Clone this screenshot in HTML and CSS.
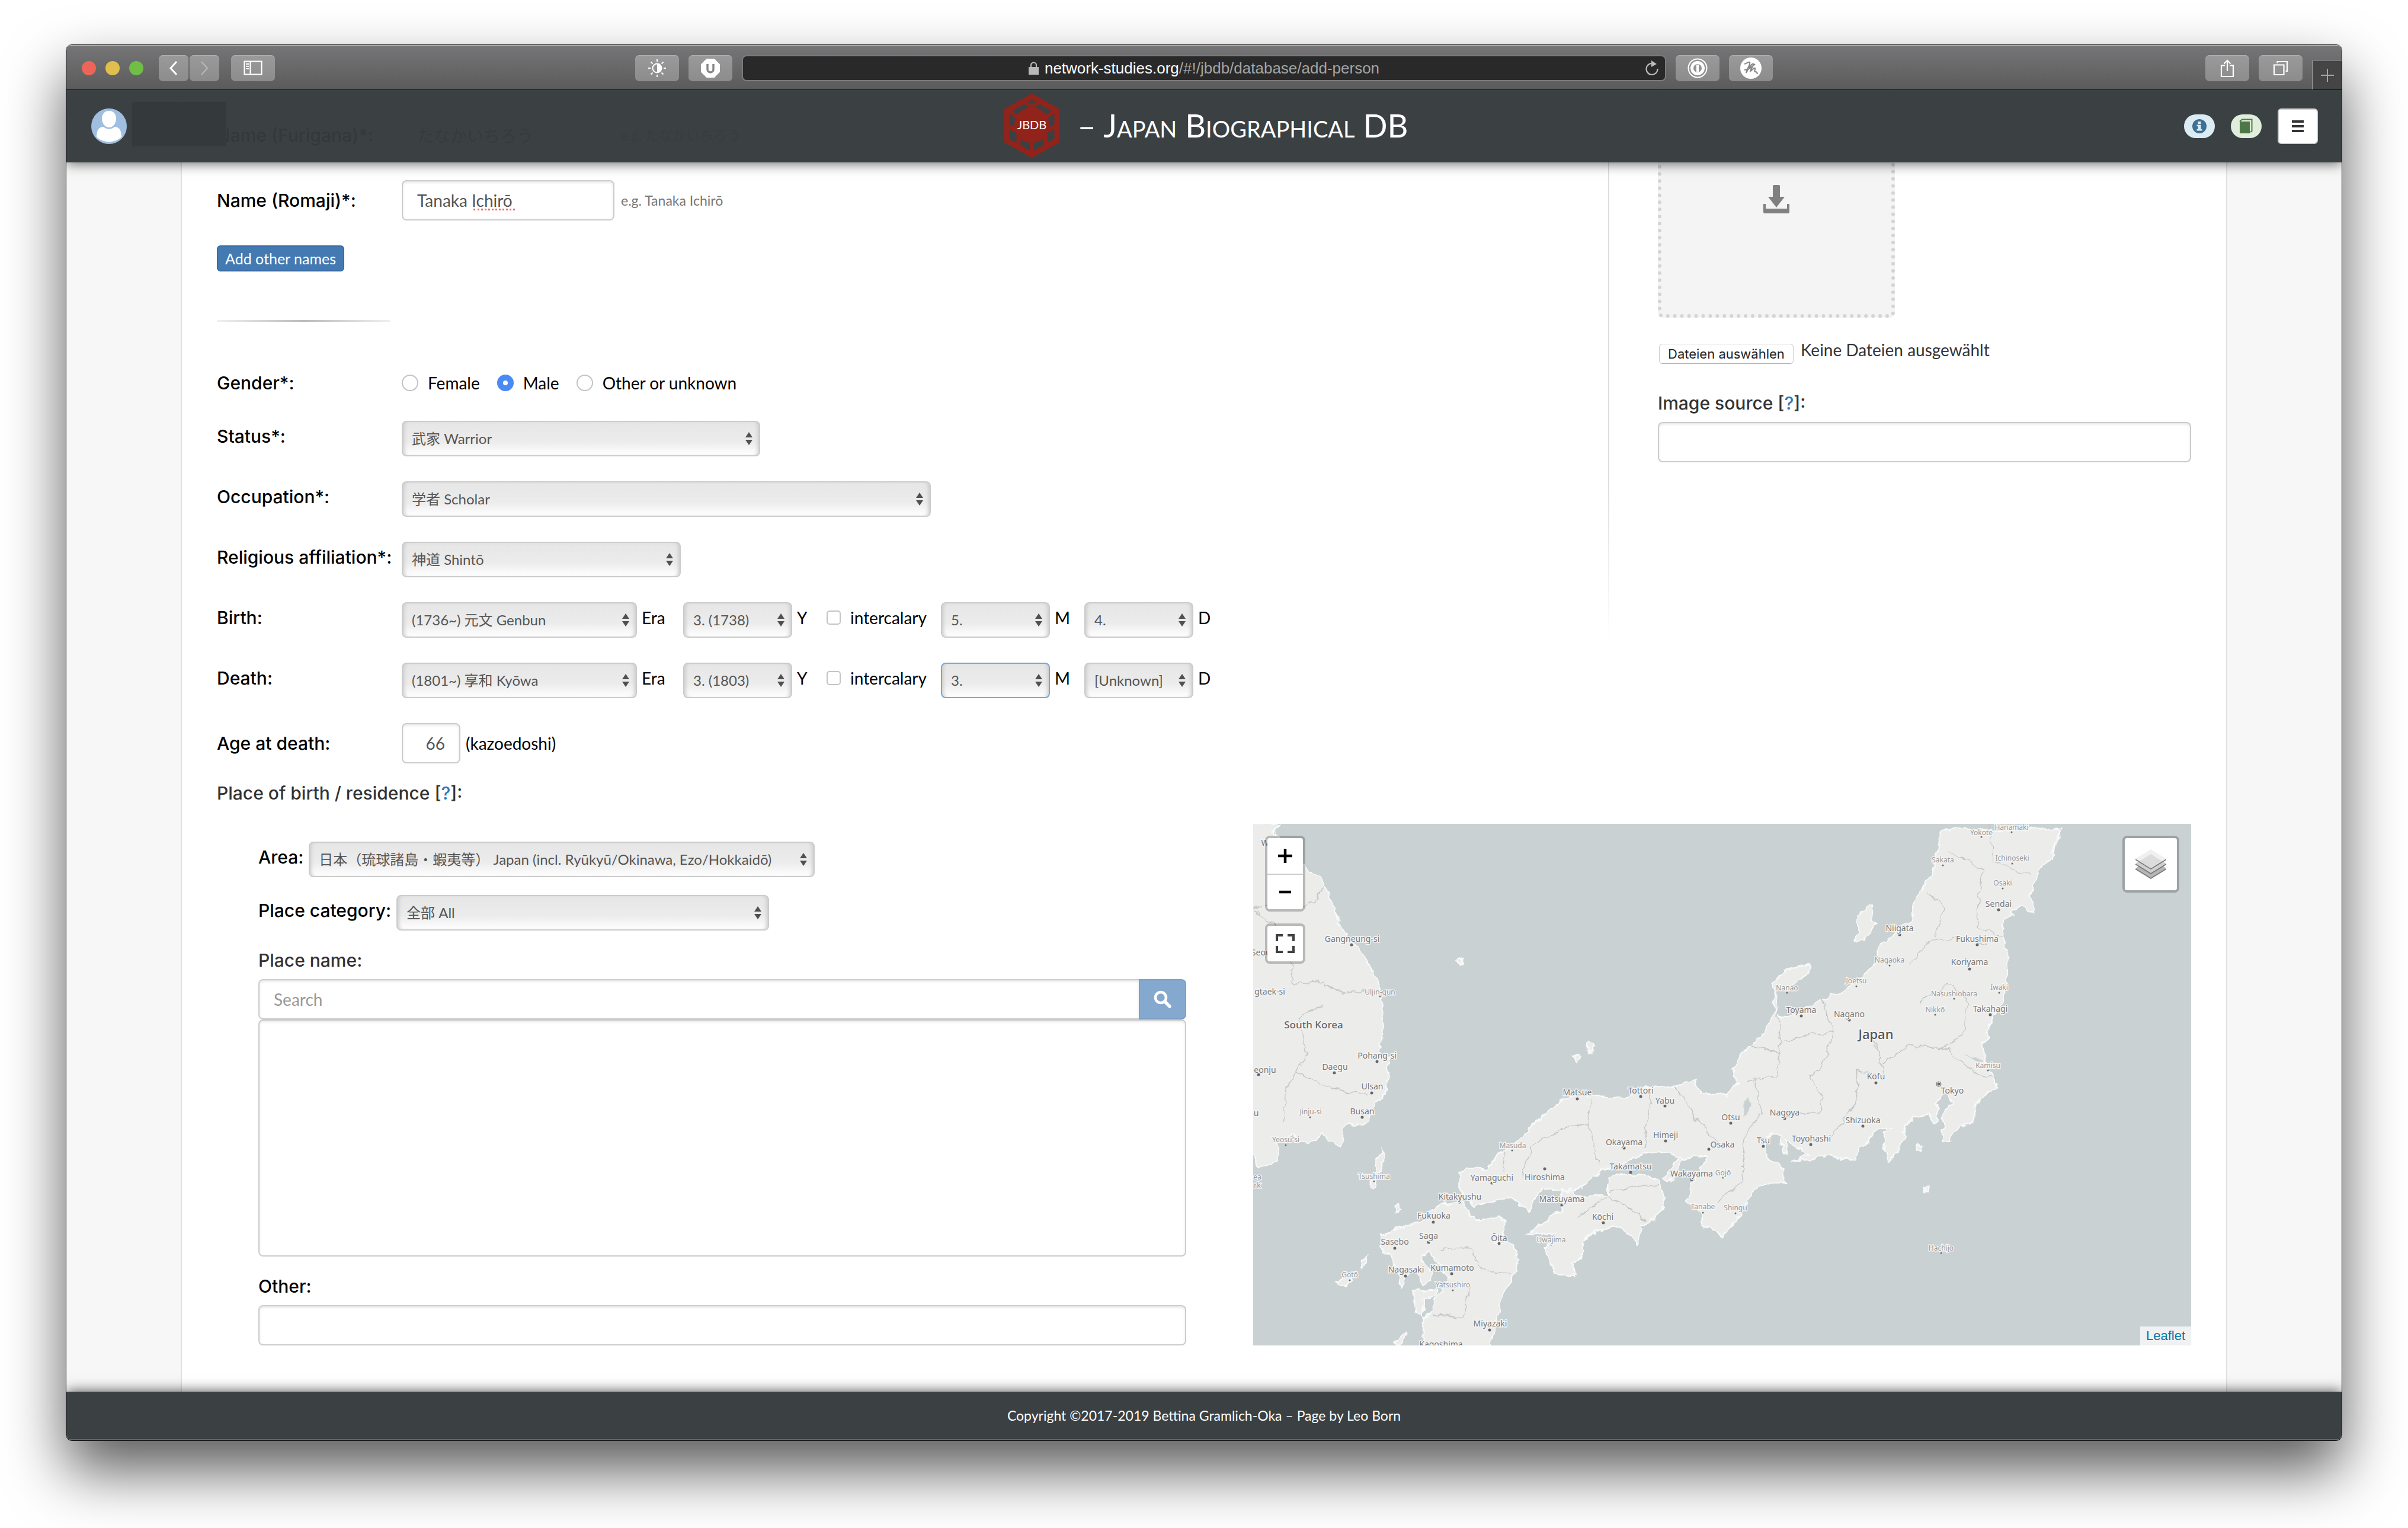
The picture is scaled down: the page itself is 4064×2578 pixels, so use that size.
FILE: index.html
```html
<!DOCTYPE html>
<html lang="en">
<head>
<meta charset="utf-8">
<title>Japan Biographical DB</title>
<link rel="stylesheet" href="styles.css">
</head>
<body>
<div class="window">
  <div class="toolbar">
    <div class="toolbar-side">
      <div class="lights"><span class="light light-red"></span><span class="light light-yellow"></span><span class="light light-green"></span></div>
      <div class="nav-pair">
        <button class="tool tool-narrow" aria-label="Back"><svg width="18" height="28" viewBox="0 0 18 28"><path d="M14 3 4 14l10 11" fill="none" stroke="#fff" stroke-width="3"/></svg></button>
        <button class="tool tool-narrow" aria-label="Forward"><svg width="18" height="28" viewBox="0 0 18 28"><path d="M4 3l10 11L4 25" fill="none" stroke="#b9b9b9" stroke-width="2"/></svg></button>
      </div>
      <button class="tool" aria-label="Sidebar"><svg width="32" height="26" viewBox="0 0 32 26"><path d="M1.500 1.500h29v22h-29zM11.500 1v23M4 6h5M4 10h5M4 14h5" fill="none" stroke="#fff" stroke-width="2.200"/></svg></button>
    </div>
    <div class="toolbar-center">
      <button class="tool" aria-label="Brightness"><svg width="30" height="30" viewBox="0 0 30 30"><circle cx="15" cy="15" r="7.500" fill="none" stroke="#fff" stroke-width="2"/><path d="M15 8a7 7 0 0 1 0 14z" fill="#fff"/><path d="M15 0v4M15 26v4M0 15h4M26 15h4M4.500 4.500l3 3M22.500 22.500l3 3M25.500 4.500l-3 3M7.500 22.500l-3 3" stroke="#fff" stroke-width="2"/></svg></button>
      <button class="tool" aria-label="Extension U"><svg width="34" height="34" viewBox="0 0 34 34"><path d="M10.500 1h13L33 10.500v13L23.500 33h-13L1 23.500v-13z" fill="#fff"/><path d="M12 10v9a5 5 0 0 0 10 0v-9" fill="none" stroke="#888" stroke-width="3.500"/></svg></button>
      <div class="address">
        <svg class="lock" width="17" height="22" viewBox="0 0 17 22"><path d="M0 9h17v13H0z" fill="#b8b8b8"/><path d="M4 10V6a4.500 4.500 0 0 1 9 0v4" fill="none" stroke="#b8b8b8" stroke-width="2.200"/></svg>
        <span class="url"><b>network-studies.org</b>/#!/jbdb/database/add-person</span>
        <svg class="reload" width="24" height="28" viewBox="0 0 24 28"><path d="M15 6.500A9.500 9.500 0 1 0 21.500 15" fill="none" stroke="#bbb" stroke-width="2.200"/><path d="M11 1l9 6-9 5z" fill="#bbb"/></svg>
      </div>
      <button class="tool" aria-label="Password manager"><svg width="34" height="34" viewBox="0 0 34 34"><circle cx="17" cy="17" r="15.500" fill="none" stroke="#fff" stroke-width="2"/><circle cx="17" cy="17" r="9.500" fill="none" stroke="#fff" stroke-width="5"/><path d="M17 11v12" stroke="#fff" stroke-width="4"/></svg></button>
      <button class="tool" aria-label="Extension"><svg width="36" height="36" viewBox="0 0 36 36"><circle cx="18" cy="18" r="18" fill="#fff"/><path d="M7 11c4-1 7-4 9-3 2 2-5 13-6 18 3-6 9-16 12-15 2 1-5 9-5 12 2 0 5-6 8-5 1 1-2 5 0 6s3-1 4 4M7 21c8-1 13-5 18-10" fill="none" stroke="#888" stroke-width="2.200"/></svg></button>
    </div>
    <div class="toolbar-side toolbar-right">
      <button class="tool" aria-label="Share"><svg width="24" height="32" viewBox="0 0 24 32"><path d="M8 11.500H2v18.500h20V11.500h-6M12 21V3M6.500 8.500 12 3l5.500 5.500" fill="none" stroke="#fff" stroke-width="2.200"/></svg></button>
      <button class="tool" aria-label="Show tabs"><svg width="26" height="26" viewBox="0 0 26 26"><path d="M2 7.500h16.500V24H2zM7.500 4.500V2H24v16h-2.500" fill="none" stroke="#fff" stroke-width="2.200"/></svg></button>
      <button class="new-tab" aria-label="New tab"><svg width="22" height="22" viewBox="0 0 22 22"><path d="M11 0v22M0 11h22" stroke="#a5a5a5" stroke-width="2"/></svg></button>
    </div>
  </div>

  <div class="page">
    <header class="site-header">
      <div class="account">
        <svg width="60" height="60" viewBox="0 0 60 60"><circle cx="30" cy="30" r="30" fill="#a0bedf"/><path d="M30 4c8 0 12 6 12 13 0 8-5 15-12 15s-12-7-12-15C18 10 22 4 30 4z" fill="#fff"/><path d="M9 48c0-10 3-17 12-17 5 5 13 5 18 0 9 0 12 7 12 17-11 11-31 11-42 0z" fill="#fff"/></svg>
        <span class="account-name"></span>
      </div>
      <h1 class="brand">
        <svg width="95" height="108" viewBox="0 0 95 108"><g fill="none" stroke="#92231a"><path d="M47.500 5 90 29v50L47.500 103 5 79V29z" stroke-width="9"/><path d="M33 12l32 24M62 12 30 36M5 27l25 17M90 27 65 44" stroke-width="6"/><path d="M5 54l20 10v30M90 54 70 64v30M47.500 76v28" stroke-width="7"/></g><circle cx="47.500" cy="53" r="30" fill="#92231a"/><text x="47.500" y="60" text-anchor="middle" class="logo-text">JBDB</text></svg>
        <span>– Japan Biographical DB</span>
      </h1>
      <div class="header-actions">
        <a href="#info" class="pill pill-info" aria-label="Information"><svg width="24" height="24" viewBox="0 0 24 24"><circle cx="12" cy="12" r="12" fill="#3f6f91"/><path d="M9.500 4h5v4h-5zM7.500 9.500h7V17h2v2.500h-9V17h2v-5h-2z" fill="#dcecf5"/></svg></a>
        <a href="#guide" class="pill pill-guide" aria-label="Guide"><svg width="24" height="26" viewBox="0 0 24 26"><path d="M1 5h17v20H1z" fill="#4d7748"/><path d="M1 5l4-3.500h16.500V21L19 23" fill="none" stroke="#4d7748" stroke-width="2"/></svg></a>
        <button class="menu" aria-label="Menu"><svg width="20" height="20" viewBox="0 0 20 20"><path d="M0 2h20M0 10h20M0 18h20" stroke="#333" stroke-width="4"/></svg></button>
      </div>
    </header>

    <main class="panel">
      <div class="columns">
        <form class="person">
          <div class="row">
            <label class="label" for="furigana">Name (Furigana)*:</label>
            <input class="text name" id="furigana" value="たなかいちろう">
            <span class="hint">e.g. たなかいちろう</span>
          </div>
          <div class="row">
            <label class="label" for="romaji">Name (Romaji)*:</label>
            <div class="spell"><input class="text name" id="romaji" value="Tanaka Ichirō"><span class="squiggle"></span></div>
            <span class="hint">e.g. Tanaka Ichirō</span>
          </div>
          <div><button type="button" class="add">Add other names</button></div>
          <hr class="rule">
          <div class="row gender" role="radiogroup" aria-labelledby="gender-label">
            <span class="label" id="gender-label">Gender*:</span>
            <label class="choice"><input type="radio" name="gender">Female</label>
            <label class="choice"><input type="radio" name="gender" checked>Male</label>
            <label class="choice"><input type="radio" name="gender">Other or unknown</label>
          </div>
          <div class="row picks">
            <label class="label" for="status">Status*:</label>
            <select id="status" class="w-status"><option>武家 Warrior</option></select>
          </div>
          <div class="row picks">
            <label class="label" for="occupation">Occupation*:</label>
            <select id="occupation" class="w-occupation"><option>学者 Scholar</option></select>
          </div>
          <div class="row picks">
            <label class="label" for="religion">Religious affiliation*:</label>
            <select id="religion" class="w-religion"><option>神道 Shintō</option></select>
          </div>
          <div class="row picks">
            <span class="label">Birth:</span>
            <select id="b-era" class="w-era"><option>(1736~) 元文 Genbun</option></select><label class="unit unit-era" for="b-era">Era</label>
            <select id="b-year" class="w-part"><option>3. (1738)</option></select><label class="unit" for="b-year">Y</label>
            <label class="leap"><input type="checkbox">intercalary</label>
            <select id="b-month" class="w-part"><option>5.</option></select><label class="unit" for="b-month">M</label>
            <select id="b-day" class="w-part"><option>4.</option></select><label class="unit" for="b-day">D</label>
          </div>
          <div class="row picks">
            <span class="label">Death:</span>
            <select id="d-era" class="w-era"><option>(1801~) 享和 Kyōwa</option></select><label class="unit unit-era" for="d-era">Era</label>
            <select id="d-year" class="w-part"><option>3. (1803)</option></select><label class="unit" for="d-year">Y</label>
            <label class="leap"><input type="checkbox">intercalary</label>
            <select id="d-month" class="w-part active"><option>3.</option></select><label class="unit" for="d-month">M</label>
            <select id="d-day" class="w-part"><option>[Unknown]</option></select><label class="unit" for="d-day">D</label>
          </div>
          <div class="row">
            <label class="label" for="age">Age at death:</label>
            <input class="text age" id="age" value="66">
            <span class="after">(kazoedoshi)</span>
          </div>
        </form>

        <aside class="portrait">
          <div class="dropzone"><svg width="44" height="48" viewBox="0 0 44 48"><path d="M18 0h8a2 2 0 0 1 2 2v18h8L22 38 8 20h8V2a2 2 0 0 1 2-2z" fill="#808080"/><path d="M0 32h4v8h36v-8h4v14a2 2 0 0 1-2 2H2a2 2 0 0 1-2-2z" fill="#808080"/></svg></div>
          <div class="file"><input type="file" id="files" class="visually-hidden" multiple><label class="file-button" for="files">Dateien auswählen</label><span>Keine Dateien ausgewählt</span></div>
          <label class="title source-title" for="source">Image source [<a href="#source-help">?</a>]:</label>
          <input class="text full" id="source">
        </aside>
      </div>

      <h2 class="title">Place of birth / residence [<a href="#place-help">?</a>]:</h2>

      <div class="place">
        <div class="place-form">
          <div class="inline picks"><label class="dark" for="area">Area:</label><select id="area" class="w-area"><option>日本（琉球諸島・蝦夷等） Japan (incl. Ryūkyū/Okinawa, Ezo/Hokkaidō)</option></select></div>
          <div class="inline picks"><label class="dark" for="category">Place category:</label><select id="category" class="w-category"><option>全部 All</option></select></div>
          <label class="title" for="search">Place name:</label>
          <div class="search"><input class="text" id="search" placeholder="Search"><button type="button" aria-label="Search"><svg width="30" height="30" viewBox="0 0 30 30"><circle cx="12" cy="12" r="9" fill="none" stroke="#fff" stroke-width="4.500"/><path d="M18.500 18.500 27 27" stroke="#fff" stroke-width="5.500" stroke-linecap="round"/></svg></button></div>
          <textarea class="text results" aria-label="Places found"></textarea>
          <label class="title dark" for="other">Other:</label>
          <input class="text full" id="other">
        </div>

        <div class="map">
          <svg class="map-tiles" viewBox="0 0 1583 880" preserveAspectRatio="xMidYMid slice">
            <defs>
              <filter id="coast" x="-2%" y="-2%" width="104%" height="104%"><feTurbulence type="fractalNoise" baseFrequency=".06" numOctaves="3" seed="4"/><feDisplacementMap in="SourceGraphic" scale="14" xChannelSelector="R" yChannelSelector="G"/></filter>
              <filter id="wander" x="-2%" y="-2%" width="104%" height="104%"><feTurbulence type="fractalNoise" baseFrequency=".018" numOctaves="4" seed="9"/><feDisplacementMap in="SourceGraphic" scale="70" xChannelSelector="R" yChannelSelector="G"/></filter>
              <pattern id="roads" width="64" height="58" patternUnits="userSpaceOnUse" patternTransform="rotate(24)"><path d="M0 14l15-6 14 9 17-7 18 4M0 43l12-4 18 7 16-8 18 5M15 0v8l-4 17 2 14-3 19M46 0v10l-7 15 7 13 3 20M29 17l10 8M11 25l19 4v17M39 25l25 3M30 46l-2 12" fill="none" stroke="#fff" stroke-width="2.600"/></pattern>
              <g id="land">
                <path d="M0 17H108L85 40l25 20 80 88 55 37 25 55 20 60 45 65 40 45 37 60 13 55 8 45-5 70-10 65 34-5-7 60-13 60-22 20-20 35-20 28-45-3-20 15 5 35-20 15-50-35-45 35-45-35-50 25 5 55-55 15-50-65z"/>
                <path d="M672 1045l18-17 65 2 45-50 50-30 70-65 55-50 55-20h60l100 5 80-30h70l65-22 15 37 80 15 34-35-8-55 25-38 25-20 65-70 20-50-7-40-8-30 30-30 80-22 3 17-18 25-40 20 -50 15-5 35 20 45 65-10 8-20 55-20 70-30 65-45 40-45 5-35 35-30 45-35 25-20 5-50 25-45 35-35 10-70 23-63H2546l-25 43-5 40-35 30-20 40-10 30 10 62-45-22-35 25-25 35 18 70 2 70-10 80-25 25-20 45-20 60 5 50 40 73-40 22-30 35-5 40-45 25-30 35-23 5 3-45-5-30 20-30 20-10-35-35-20 45 2 40-14 15-13-30-45 5-30 25v45l-25 40-25 20-14-30 6-55 18-15-50 10-25 35-25 20-13 35-47-10h-60l-90 15 50-20-71-45 6 40-15-10-8-45-27-5-20 30v35l60 40v40h-45l-50 20-20 35-30 50-45 53-61-33-10-40-42-30 12-50 30-40 20-40-70 5-70-20-60 5-60 30-80 25-50 45-60 10-60-10-30 30-10 40-40-30-20-12-70 12-40 15-30-20-18-25z"/>
                <path d="M1360 990l8 10-38 70-22-10zM985 1100l35-10 20 25 90-5 5-50 35-15h65l60 20 15 75-40 40-30 20-15 50-55-50-70 10-40 30-10 50-30 20 8 40-58-10-20-40-15-30 35-50-90 5 50-35 55-40z"/>
                <path d="M600 1140l70-15 20 25 30 35 70-17 25 22-3 35-32 25h55l20 50-15 35-25 45-20 60-20 60-5 60H555l3-90 32-20 10-50 40-40-20-30-28-30-17-30-25 20 10 30 26 10-6 30-25 10-15-30-25-10-25 48-10-38-20-50-40-30 8-35 72-25 50-10zM522 1390l78-5-10 25-35 0v55l-15-10zM430 975l7 35-37 77-15-7 25-40v-40zM1946 257l10 1-5 42 15 8-35 52-30 2 15-27-10-20 5-30zM1060 665l15-10 17 15-17 18zM1020 703l25-8 6 10-22 10zM658 420l20-7-2 17zM290 1365l35-25 12 18-25 15zM365 1300l20-14-8 20-12 18zM468 1140l12-6 6 18-14 8zM2095 958l14 2-2 15-12-2zM2118 1086l10 0-2 12-8-2zM2165 1270l12 12-4 4zM472 1540l30-30 6 6-25 35z"/>
              </g>
              <clipPath id="shore"><use href="#land"/></clipPath>
            </defs>
            <rect width="1583" height="880" fill="#cad1d3"/>
            <g filter="url(#coast)">
              <g transform="matrix(.5421 0 0 .574 -15 -9.800)">
                <use href="#land" fill="#ececeb" stroke="#f8f9f9" stroke-width="4"/>
                <path clip-path="url(#shore)" d="M1830 570l8 90 20 70 10 80M1900 760l-10 90 20 50M1790 700l30 80M2150 180l20 120M1250 1130l-80 50M700 1420l-20 60M140 790l-20 80M1960 830l50 40" fill="none" stroke="#dededd" stroke-width="16"/>
                <g clip-path="url(#shore)"><rect x="-40" y="-40" width="3100" height="1660" fill="url(#roads)" filter="url(#wander)"/></g>
                <path d="M28 265l70-6 90 0 40-20 18-45M28 270l60 35 60 130 0 55 80-12 60 32 90 0 40 8M240 550l-70 40 25 110-30 45 110 50 110 20M165 745l-40 60 0 90M1080 830l-10 60 35 130M1245 970l25-180M865 1050l30-85 110-60 70-8M810 1040l-5-60M1340 790l80 110 60 60M1135 1100l90-20 70-5M1040 1170l95-60 115 70M610 1270l90-10 40 70 95 10M590 1460l90 10 25-100M1470 1130l80-60 10-140 50-60-20-110M1660 540l8 150-90-20M1668 690l-10 70-90 10M1800 530l30 100-70 10-80 15M1830 630l-30 100-40 30 40 60-10 45-120 10M1955 640l40 120-90-20 0 100-85 100M1990 720l80-50 120 10 80 65 70 20M2100 540l90-50 60 40-10 110-80 40M2070 430l60-70 120-10 60 20M2130 220l50 40-30 90M2190 100l110 50-20 170 90 30M2320 17l10 110 110 40" fill="none" stroke="#c3c5c5" stroke-width="2.500"/>
                <path d="M1550 870l16-50 14 20-10 30zM2250 695l50 20-6 12z" fill="#cad1d3"/>
              </g>
            </g>
            <g class="dots">
              <path class="dot" d="M166 204h0M6 291h0M137 420h0M209 401h0M9 423h0M200 454h0M184 495h0M547 464h0M654 460h0M695 476h0M806 505h0M696 535h0M769 549h0M626 547h0M637 588h0M740 600h0M492 582h0M403 606h0M348 638h0M521 643h0M304 672h0M591 673h0M296 706h0M239 716h0M415 708h0M257 763h0M335 759h0M399 854h0M1258 145h0M1091 187h0M1222 204h0M1209 245h0M925 324h0M1006 331h0M1244 322h0M1051 437h0M1157 439h0M897 497h0M1029 510h0M941 541h0M861 544h0"/>
              <path class="dot dot-small" d="M214 291h0M96 495h0M55 542h0M204 603h0M793 597h0M437 551h0M503 710h0M163 770h0M337 787h0M759 656h0M814 657h0M1229 22h0M1280 14h0M1164 70h0M1281 67h0M1265 109h0M1074 239h0M1018 274h0M1259 285h0M901 285h0M1183 295h0M1151 322h0M1240 416h0M1161 724h0"/>
              <circle cx="1157" cy="439" r="4" fill="none" stroke="#666"/>
            </g>
            <g class="city">
              <text x="20" y="37">W</text><text x="167" y="199">Gangneung-si</text><text x="15" y="222">Seoul</text><text x="28" y="288">gtaek-si</text><text x="138" y="415">Daegu</text><text x="209" y="396">Pohang-si</text><text x="20" y="420">eonju</text><text x="201" y="448">Ulsan</text><text x="184" y="490">Busan</text><text x="5" y="493">u</text>
              <text x="547" y="458">Matsue</text><text x="654" y="455">Tottori</text><text x="695" y="472">Yabu</text><text x="806" y="500">Otsu</text><text x="696" y="530">Himeji</text><text x="792" y="546">Osaka</text><text x="626" y="542">Okayama</text><text x="637" y="583">Takamatsu</text><text x="740" y="595">Wakayama</text><text x="492" y="601">Hiroshima</text><text x="403" y="602">Yamaguchi</text><text x="349" y="634">Kitakyushu</text><text x="521" y="638">Matsuyama</text><text x="305" y="666">Fukuoka</text><text x="590" y="668">Kōchi</text><text x="296" y="700">Saga</text><text x="239" y="710">Sasebo</text><text x="415" y="704">Ōita</text><text x="258" y="757">Nagasaki</text><text x="336" y="754">Kumamoto</text><text x="400" y="848">Miyazaki</text><text x="317" y="883">Kagoshima</text>
              <text x="1258" y="140">Sendai</text><text x="1091" y="181">Niigata</text><text x="1222" y="199">Fukushima</text><text x="1209" y="238">Koriyama</text><text x="925" y="319">Toyama</text><text x="1006" y="326">Nagano</text><text x="1244" y="317">Takahagi</text><text x="1051" y="431">Kofu</text><text x="1180" y="455">Tokyo</text><text x="897" y="492">Nagoya</text><text x="1029" y="505">Shizuoka</text><text x="942" y="536">Toyohashi</text><text x="861" y="539">Tsu</text>
            </g>
            <g class="city town">
              <text x="214" y="288">Uljin-gun</text><text x="97" y="490">Jinju-si</text><text x="55" y="537">Yeosu-si</text><text x="7" y="600">ea</text><text x="7" y="614">rk</text><text x="204" y="599">Tsushima</text><text x="793" y="593">Gojō</text><text x="438" y="547">Masuda</text><text x="503" y="706">Uwajima</text><text x="163" y="765">Gotō</text><text x="337" y="782">Yatsushiro</text><text x="759" y="650">Tanabe</text><text x="814" y="652">Shingu</text><text x="1229" y="19">Yokote</text><text x="1280" y="10">Hanamaki</text><text x="1164" y="65">Sakata</text><text x="1281" y="62">Ichinoseki</text><text x="1265" y="104">Osaki</text><text x="1074" y="234">Nagaoka</text><text x="1018" y="269">Joetsu</text><text x="1259" y="280">Iwaki</text><text x="901" y="281">Nanao</text><text x="1183" y="291">Nasushiobara</text><text x="1151" y="318">Nikkō</text><text x="1240" y="412">Kamisu</text><text x="1161" y="720">Hachijo</text>
            </g>
            <g class="city"><text x="102" y="345" class="korea">South Korea</text><text x="1051" y="363" class="japan">Japan</text></g>
          </svg>
          <div class="map-left">
            <div class="control"><button type="button" aria-label="Zoom in"><svg width="26" height="26" viewBox="0 0 26 26"><path d="M13 1v24M1 13h24" stroke="#000" stroke-width="4.500"/></svg></button><button type="button" aria-label="Zoom out"><svg width="26" height="26" viewBox="0 0 26 26"><path d="M3 13h20" stroke="#000" stroke-width="4.500"/></svg></button></div>
            <div class="control"><button type="button" aria-label="Full screen"><svg width="32" height="32" viewBox="0 0 32 32"><path d="M2 12V2h10M20 2h10v10M30 20v10H20M12 30H2V20" fill="none" stroke="#404040" stroke-width="4"/></svg></button></div>
          </div>
          <div class="control map-layers"><button type="button" aria-label="Layers"><svg width="52" height="50" viewBox="0 0 52 50"><path d="M0 33l26-16 26 16v1L26 50 0 34z" fill="#777"/><path d="M0 32l26-16 26 16-26 16z" fill="#b5b5b5"/><path d="M0 25l26-16 26 16v1L26 42 0 26z" fill="#777"/><path d="M0 24l26-16 26 16-26 16z" fill="#cfcfcf"/><path d="M0 17 26 1l26 16v1L26 34 0 18z" fill="#777"/><path d="M0 16 26 0l26 16-26 16z" fill="#f0f0f0"/><path d="M7 20 26 8l19 12-19 12z" fill="#dcdcdc"/></svg></button></div>
          <div class="attribution"><a href="#leaflet">Leaflet</a></div>
        </div>
      </div>
    </main>
  </div>
  <footer class="site-footer">Copyright ©2017-2019 Bettina Gramlich-Oka – Page by Leo Born</footer>
</div>
</body>
</html>
```

FILE: styles.css
```css
* { box-sizing: border-box; }

body {
  margin: 0;
  padding: 75px 111px 147px;
  background: #fff;
  color: #333;
  font: 28px/40px Lato, "Noto Sans CJK JP", sans-serif;
}

button, input, select, textarea { font: inherit; color: inherit; margin: 0; }
button { cursor: pointer; padding: 0; border: 0; }
svg { display: block; flex: none; }
a { color: #337ab7; text-decoration: none; }

.window {
  border: 1px solid #111;
  border-radius: 10px;
  overflow: hidden;
  box-shadow: 0 50px 100px rgba(0, 0, 0, .65);
}

/* Browser toolbar */
.toolbar {
  display: flex;
  height: 76px;
  border-top: 2px solid #a3a5a0;
  border-bottom: 1px solid #000;
  background: linear-gradient(#757577, #5b5b5b);
}
.toolbar-side { width: 25%; display: flex; align-items: center; padding-left: 26px; }
.lights { display: flex; gap: 16px; margin-right: 26px; }
.light { width: 24px; height: 24px; border-radius: 50%; }
.light-red { background: #ec6559; }
.light-yellow { background: #e0bf4c; }
.light-green { background: #71be47; }
.nav-pair { display: flex; gap: 2px; margin-right: 20px; }
.tool {
  display: flex;
  align-items: center;
  justify-content: center;
  flex: none;
  width: 74px;
  height: 44px;
  border-radius: 7px;
  background: linear-gradient(#9a9a9a, #8c8c8c);
  box-shadow: inset 0 1px #b0b0b0;
}
.tool-narrow { width: 50px; }
.toolbar-center { width: 50%; display: flex; align-items: center; gap: 16px; }
.address {
  flex: 1;
  display: flex;
  align-items: center;
  justify-content: center;
  gap: 10px;
  height: 44px;
  padding-left: 44px;
  border: 2px solid #7b7b7b;
  border-radius: 8px;
  background: #292929;
  color: #a5a5a5;
  font: 26px/40px "Liberation Sans", sans-serif;
}
.address b { font-weight: 400; color: #fff; }
.lock { margin-left: auto; }
.reload { margin-left: auto; margin-right: 10px; }
.toolbar-right { justify-content: flex-end; gap: 16px; padding: 0; }
.new-tab {
  display: flex;
  align-items: center;
  justify-content: center;
  align-self: flex-end;
  width: 50px;
  height: 50px;
  border-left: 2px solid #888;
  border-top: 2px solid #777;
  background: #454545;
}

/* Site header */
.page { position: relative; overflow: hidden; background: #f7f7f7; }
.site-header {
  position: absolute;
  z-index: 2;
  inset: 0 0 auto;
  display: grid;
  grid-template-columns: 1fr auto 1fr;
  align-items: center;
  height: 122px;
  padding: 0 40px;
  background: rgba(53, 58, 61, .97);
  box-shadow: 0 2px 20px rgba(0, 0, 0, .6);
}
.account { display: flex; align-items: center; gap: 9px; padding-left: 2px; }
.account-name { width: 159px; height: 75px; margin-bottom: 8px; background: #34393c; }
.brand {
  display: flex;
  align-items: center;
  gap: 30px;
  margin: 0;
  padding: 0 0 2px 6px;
  color: #fff;
  font-size: 54px;
  font-weight: 400;
  font-variant: small-caps;
}
.logo-text { fill: #fff; font: 20px Lato, sans-serif; }
.header-actions { display: flex; align-items: center; justify-content: flex-end; gap: 27px; }
.pill {
  display: flex;
  align-items: center;
  justify-content: center;
  width: 52px;
  height: 40px;
  border-radius: 20px;
}
.pill-info { background: #dcecf5; }
.pill-guide { background: #e1eedb; }
.menu {
  display: flex;
  align-items: center;
  justify-content: center;
  width: 68px;
  height: 60px;
  border: 2px solid #ccc;
  border-radius: 6px;
  background: #fff;
}

/* Form */
.panel {
  margin: 0 193px;
  padding: 0 59px 78px;
  border: solid #e0e0e0;
  border-width: 0 2px;
  background: #fff;
}
.columns { display: grid; grid-template-columns: minmax(0, 1fr) 984px; align-items: start; }
.person { display: flex; flex-direction: column; gap: 42px; padding-top: 42px; color: #000; }
.row { display: flex; align-items: center; }
.label, .dark, .title { font-family: Inter, "Noto Sans CJK JP", sans-serif; font-size: 30px; font-weight: 500; }
.label { flex: none; width: 312px; white-space: nowrap; }
.picks > label, .picks > .label { padding-bottom: 8px; }
.text {
  height: 68px;
  padding: 0 24px;
  border: 2px solid #ccc;
  border-radius: 8px;
  background: #fff;
  box-shadow: inset 0 2px 4px rgba(0, 0, 0, .1);
  color: #555;
}
.text::placeholder { color: #999; }
.name { display: block; width: 359px; }
.spell { position: relative; }
.squiggle { position: absolute; left: 121px; top: 48px; width: 70px; border-top: 3px dotted #f0645a; }
.hint { margin-left: 11px; color: #777; font-size: 23px; }
.add {
  display: block;
  height: 44px;
  padding: 0 12px;
  border: 2px solid #3b6ba6;
  border-radius: 6px;
  background: #437ab2;
  color: #fff;
  font-size: 25px;
}
.rule {
  width: 293px;
  height: 3px;
  margin: 40px 0 39px;
  border: 0;
  background: linear-gradient(90deg, #f0f0f0, #bbb, #f0f0f0);
}
.gender { height: 44px; }
.choice { display: flex; align-items: center; gap: 16px; margin-right: 29px; }
.choice input, .leap input {
  appearance: none;
  width: 28px;
  height: 28px;
  border: 2px solid #c4c4c4;
  border-radius: 50%;
  background: #fff;
}
.choice input:checked { border: 10px solid #4a8af4; }
select {
  appearance: none;
  flex: none;
  height: 60px;
  padding: 0 30px 0 15px;
  border: 2px solid #ccc;
  border-radius: 8px;
  background:
    url("data:image/svg+xml,%3Csvg xmlns='http://www.w3.org/2000/svg' width='12' height='22'%3E%3Cpath d='M6 0l6 9H0zM6 22l6-9H0z' fill='%23505050'/%3E%3C/svg%3E") right 11px center no-repeat,
    linear-gradient(#e6e6e6, #ececec 60%, #fff);
  box-shadow: inset 6px 0 6px -4px #c8c8c8, inset -6px 0 6px -4px #c8c8c8;
  color: #555;
  font-size: 24px;
}
.w-status { width: 605px; }
.w-occupation { width: 893px; }
.w-religion { width: 471px; }
.w-era { width: 397px; }
.w-part { width: 184px; }
.w-area { width: 854px; }
.w-category { width: 629px; }
.active { border-color: #70a8e8; }
.unit { width: 58px; padding-left: 8px; }
.unit-era { width: 78px; }
.leap { display: flex; align-items: center; gap: 16px; width: 193px; }
.leap input { width: 24px; height: 24px; border-radius: 5px; }
.age { width: 99px; text-align: right; }
.after { margin-left: 9px; }

/* Portrait upload */
.portrait {
  padding: 0 0 305px 82px;
  border-left: 2px solid;
  border-image: linear-gradient(#ddd 70%, #fff) 1;
}
.dropzone {
  display: flex;
  align-items: center;
  justify-content: center;
  width: 400px;
  height: 400px;
  margin-top: -16px;
  border: 6px dotted #d4d4d4;
  border-radius: 8px;
  background: #f4f4f4;
}
.file { display: flex; align-items: flex-end; gap: 12px; margin: 34px 0 42px; padding-bottom: 4px; }
.file span { padding-bottom: 4px; }
.file-button {
  height: 34px;
  margin-left: 2px;
  padding: 0 14px;
  border: 1px solid #ccc;
  border-bottom-color: #aaa;
  border-radius: 6px;
  color: #222;
  font: 22px/32px Inter, sans-serif;
}
.visually-hidden { position: absolute; width: 1px; height: 1px; opacity: 0; }
.title { display: block; margin: 0; }
.source-title { margin-bottom: 12px; }
.full { display: block; width: 100%; }

/* Place */
h2.title { margin-top: 30px; }
.place {
  display: grid;
  grid-template-columns: minmax(0, 1566fr) minmax(0, 1583fr);
  gap: 113px;
  margin-top: 32px;
  padding-left: 70px;
}
.place-form { padding-top: 30px; }
.inline { display: flex; align-items: center; gap: 9px; margin-bottom: 30px; }
.dark { color: #000; }
.place-form .title { margin-bottom: 12px; }
.search { display: flex; }
.search .text { flex: 1; border-right: 0; border-radius: 8px 0 0 8px; }
.search button {
  display: flex;
  align-items: center;
  justify-content: center;
  width: 80px;
  border: 2px solid #7c9fc8;
  border-radius: 0 8px 8px 0;
  background: #85a8ce;
}
.results { display: block; width: 100%; height: 400px; margin-bottom: 30px; resize: none; }

/* Map */
.map { position: relative; height: 880px; overflow: hidden; background: #cad1d3; }
.map-tiles { width: 100%; height: 100%; }
.city { fill: #777; stroke: #f4f4f4; stroke-width: 3px; paint-order: stroke; text-anchor: middle; font: 14px "Noto Sans", sans-serif; }
.town { fill: #999; font-size: 12px; }
.korea { fill: #666; font-size: 17px; font-weight: 500; }
.japan { fill: #555; font-size: 22px; font-weight: 500; }
.dot { stroke: #666; stroke-width: 5px; stroke-linecap: round; }
.dot-small { stroke-width: 3px; }
.map-left { position: absolute; left: 20px; top: 20px; display: grid; gap: 20px; }
.control { border: 4px solid rgba(0, 0, 0, .22); border-radius: 8px; background: #fff; background-clip: padding-box; }
.control button { display: flex; align-items: center; justify-content: center; width: 60px; height: 60px; background: none; }
.control button + button { border-top: 2px solid #ccc; }
.map-layers { position: absolute; right: 20px; top: 20px; }
.map-layers button { width: 88px; height: 88px; }
.attribution {
  position: absolute;
  right: 0;
  bottom: 0;
  padding: 0 10px;
  background: rgba(255, 255, 255, .7);
  font: 22px/32px "Liberation Sans", sans-serif;
}
.attribution a { color: #0078a8; }

.site-footer {
  position: relative;
  z-index: 3;
  height: 82px;
  border-bottom: 2px solid #666;
  background: #3b4043;
  box-shadow: 0 -2px 20px rgba(0, 0, 0, .6);
  color: #fff;
  font-size: 23px;
  line-height: 80px;
  text-align: center;
}
```
